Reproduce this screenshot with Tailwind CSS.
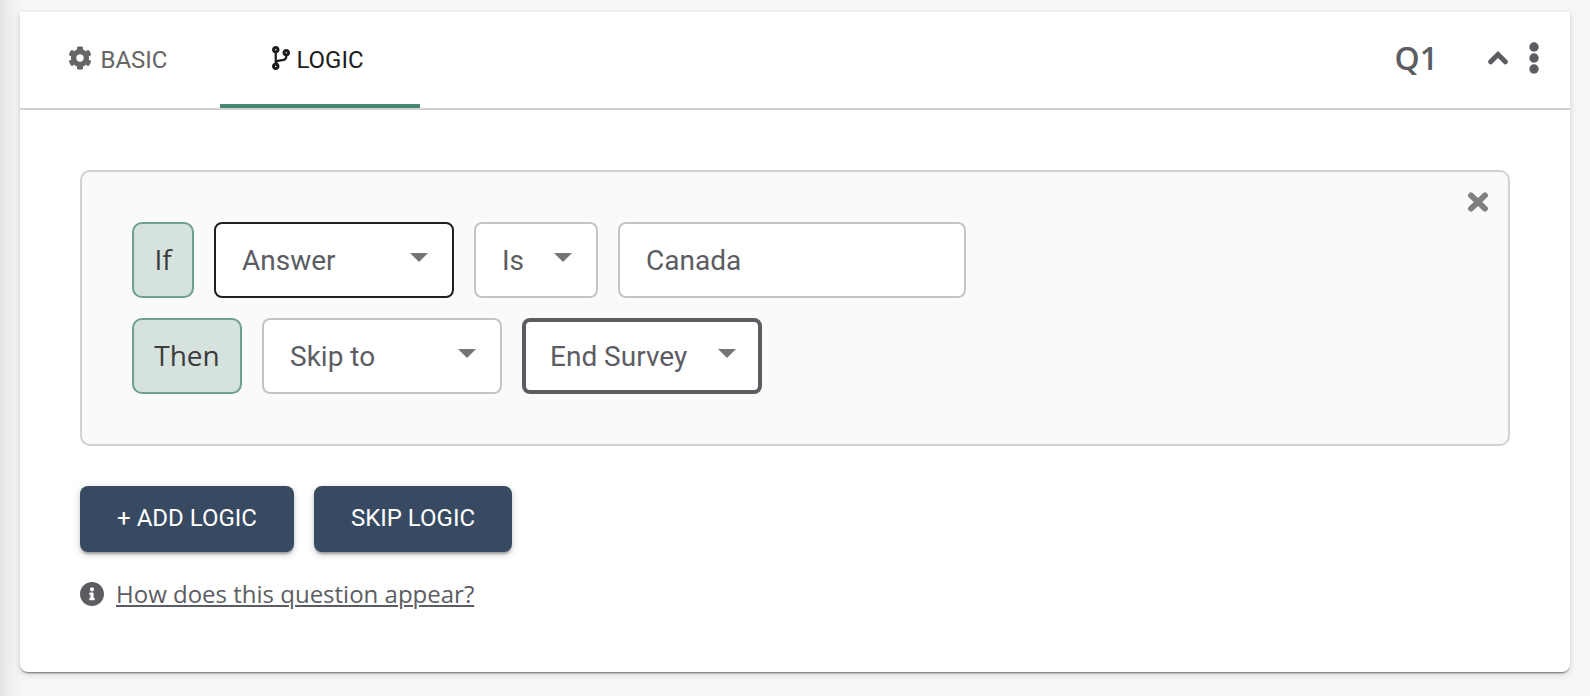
<!DOCTYPE html>
<html lang="en">
<head>
<meta charset="utf-8">
<meta name="viewport" content="width=device-width, initial-scale=1">
<title>Question logic</title>
<script src="https://cdn.jsdelivr.net/npm/@tailwindcss/browser@4"></script>
</head>
<body class="min-h-screen bg-[#f6f6f6] bg-[linear-gradient(to_right,#e4e4e4,#f2f2f2_14px,#f6f6f6_26px)] px-5 pt-3 pb-6 font-['Roboto',sans-serif] text-[#5c5d63]">
<main class="rounded-b-lg bg-white pb-[62px] shadow-[0_2px_2px_-1px_rgba(0,0,0,0.5),0_2px_6px_rgba(0,0,0,0.14)]">
  <header class="flex h-[98px] items-stretch justify-between border-b-2 border-[#d2d2d2]">
    <div role="tablist" class="flex">
      <button role="tab" aria-selected="false" class="flex w-[200px] items-center justify-center gap-2 border-y-4 border-transparent pr-1 text-2xl text-[#666]">
        <svg class="mb-1 size-6" viewBox="0 0 512 512" fill="currentColor" aria-hidden="true"><path d="M487.4 315.7l-42.6-24.6c4.3-23.2 4.3-47 0-70.2l42.6-24.6c4.9-2.8 7.1-8.6 5.5-14-11.1-35.6-30-67.8-54.7-94.6-3.8-4.1-10-5.1-14.8-2.3L380.8 110c-17.9-15.4-38.5-27.3-60.8-35.1V25.8c0-5.6-3.9-10.5-9.4-11.7-36.7-8.2-74.3-7.8-109.2 0-5.5 1.2-9.4 6.1-9.4 11.7V75c-22.2 7.9-42.8 19.8-60.8 35.1L88.7 85.5c-4.9-2.8-11-1.9-14.8 2.3-24.7 26.7-43.6 58.9-54.7 94.6-1.7 5.4.6 11.2 5.5 14L67.3 221c-4.3 23.2-4.3 47 0 70.2l-42.6 24.6c-4.9 2.8-7.1 8.6-5.5 14 11.1 35.6 30 67.8 54.7 94.6 3.8 4.1 10 5.1 14.8 2.3l42.6-24.6c17.9 15.4 38.5 27.3 60.8 35.1v49.2c0 5.6 3.9 10.5 9.4 11.7 36.7 8.2 74.3 7.8 109.2 0 5.5-1.2 9.4-6.1 9.4-11.7v-49.2c22.2-7.9 42.8-19.8 60.8-35.1l42.6 24.6c4.9 2.8 11 1.9 14.8-2.3 24.7-26.7 43.6-58.9 54.7-94.6 1.5-5.5-.7-11.3-5.6-14.1zM256 336c-44.1 0-80-35.9-80-80s35.9-80 80-80 80 35.9 80 80-35.9 80-80 80z"/></svg>
        BASIC
      </button>
      <button role="tab" aria-selected="true" class="flex w-[200px] items-center justify-center gap-1.5 border-y-4 border-t-transparent border-b-[#488674] pr-1 text-2xl text-[#1c1c1c]">
        <svg class="mb-1 h-6 w-[18px]" viewBox="0 0 384 512" fill="currentColor" aria-hidden="true"><path d="M384 144c0-44.2-35.8-80-80-80s-80 35.8-80 80c0 36.4 24.3 67.1 57.5 76.8-.6 16.1-4.2 28.5-11 36.9-15.4 19.2-49.3 22.4-85.2 25.7-28.2 2.6-57.4 5.4-81.3 16.9v-144c32.5-10.2 56-40.5 56-76.3 0-44.2-35.8-80-80-80S0 35.8 0 80c0 35.8 23.5 66.1 56 76.3v199.3C23.5 365.9 0 396.2 0 432c0 44.2 35.8 80 80 80s80-35.8 80-80c0-34-21.2-63.1-51.2-74.6 3.1-5.2 7.8-9.8 14.9-13.4 16.2-8.2 40.4-10.4 66.1-12.8 42.2-3.9 90-8.4 118.2-43.4 14-17.4 21.1-39.8 21.6-67.9 31.6-10.8 54.4-40.7 54.4-75.9zM80 64c8.8 0 16 7.2 16 16s-7.2 16-16 16-16-7.2-16-16 7.2-16 16-16zm0 384c-8.8 0-16-7.2-16-16s7.2-16 16-16 16 7.2 16 16-7.2 16-16 16zm224-320c8.8 0 16 7.2 16 16s-7.2 16-16 16-16-7.2-16-16 7.2-16 16-16z"/></svg>
        LOGIC
      </button>
    </div>
    <div class="flex items-center pr-7 pb-1">
      <h2 class="pr-[50px] font-['Open_Sans','Noto_Sans',sans-serif] text-[32px] leading-10 font-semibold">Q1</h2>
      <button aria-label="Collapse question" class="pr-[18px]">
        <svg class="h-8 w-5" viewBox="0 0 20 32" fill="none" stroke="currentColor" stroke-width="5" stroke-linecap="round" aria-hidden="true"><path d="M2.700 19.800 10 12.500 17.300 19.800"/></svg>
      </button>
      <button aria-label="More options">
        <svg class="h-8 w-4" viewBox="0 0 16 32" fill="currentColor" aria-hidden="true"><circle cx="8" cy="5" r="4.700"/><circle cx="8" cy="16" r="4.700"/><circle cx="8" cy="27" r="4.700"/></svg>
      </button>
    </div>
  </header>

  <section class="px-[60px] pt-[60px]">
    <div class="relative flex flex-col gap-5 rounded-[10px] border-2 border-[#d2d2d2] bg-[#fafafa] p-[50px] text-[28px] leading-8">
      <button aria-label="Remove logic" class="absolute top-5 right-5 text-[#808080]">
        <svg class="size-5" viewBox="0 0 20 20" fill="none" stroke="currentColor" stroke-width="5.800" stroke-linecap="round" aria-hidden="true"><path d="M3 3.400 17 16.600M17 3.400 3 16.600"/></svg>
      </button>
      <div class="flex gap-5">
        <label for="subject" class="flex h-[76px] w-[62px] items-center justify-center rounded-[10px] border-2 border-[#6b9f8f] bg-[#d6e2de] pb-0.5 font-['Open_Sans','Noto_Sans',sans-serif] text-[#3c3c3c]">If</label>
        <div class="relative w-60">
          <select id="subject" class="size-full appearance-none rounded-lg border-2 border-[#1f1f1f] bg-white pt-0.5 pr-12 pl-[26px]"><option>Answer</option></select>
          <svg class="pointer-events-none absolute top-[31px] right-[26px] h-[9px] w-[18px]" viewBox="0 0 18 9" fill="#757575" aria-hidden="true"><path d="M0 0h18L9 9z"/></svg>
        </div>
        <div class="relative w-[124px]">
          <select aria-label="Comparison" class="size-full appearance-none rounded-lg border-2 border-[#c4c4c4] bg-white pt-0.5 pr-12 pl-[26px]"><option>Is</option></select>
          <svg class="pointer-events-none absolute top-[31px] right-[26px] h-[9px] w-[18px]" viewBox="0 0 18 9" fill="#757575" aria-hidden="true"><path d="M0 0h18L9 9z"/></svg>
        </div>
        <input type="text" aria-label="Answer value" value="Canada" class="w-[348px] rounded-lg border-2 border-[#c4c4c4] bg-white px-[26px] pt-0.5">
      </div>
      <div class="flex gap-5">
        <label for="action" class="flex h-[76px] w-[110px] items-center justify-center rounded-[10px] border-2 border-[#6b9f8f] bg-[#d6e2de] pb-0.5 font-['Open_Sans','Noto_Sans',sans-serif] text-[#3c3c3c]">Then</label>
        <div class="relative w-60">
          <select id="action" class="size-full appearance-none rounded-lg border-2 border-[#c4c4c4] bg-white pt-0.5 pr-12 pl-[26px]"><option>Skip to</option></select>
          <svg class="pointer-events-none absolute top-[31px] right-[26px] h-[9px] w-[18px]" viewBox="0 0 18 9" fill="#757575" aria-hidden="true"><path d="M0 0h18L9 9z"/></svg>
        </div>
        <div class="relative w-60">
          <select aria-label="Destination" class="size-full appearance-none rounded-lg border-4 border-[#5c5d63] bg-white pt-0.5 pr-12 pl-6"><option>End Survey</option></select>
          <svg class="pointer-events-none absolute top-[31px] right-[26px] h-[9px] w-[18px]" viewBox="0 0 18 9" fill="#757575" aria-hidden="true"><path d="M0 0h18L9 9z"/></svg>
        </div>
      </div>
    </div>

    <div class="mt-10 flex gap-5 text-2xl text-white">
      <button class="h-[66px] w-[214px] rounded-lg bg-[#384a62] pb-0.5 shadow-[0_3px_3px_-1px_rgba(0,0,0,0.35),0_2px_8px_rgba(0,0,0,0.16)]">+ ADD LOGIC</button>
      <button class="h-[66px] w-[198px] rounded-lg bg-[#384a62] pb-0.5 shadow-[0_3px_3px_-1px_rgba(0,0,0,0.35),0_2px_8px_rgba(0,0,0,0.16)]">SKIP LOGIC</button>
    </div>

    <div class="mt-[26px] flex items-center gap-3 font-['Open_Sans','Noto_Sans',sans-serif] text-2xl">
      <svg class="size-6" viewBox="8 8 496 496" fill="currentColor" aria-hidden="true"><path d="M256 8C119.043 8 8 119.083 8 256c0 136.997 111.043 248 248 248s248-111.003 248-248C504 119.083 392.957 8 256 8zm0 110c23.196 0 42 18.804 42 42s-18.804 42-42 42-42-18.804-42-42 18.804-42 42-42zm56 254c0 6.627-5.373 12-12 12h-88c-6.627 0-12-5.373-12-12v-24c0-6.627 5.373-12 12-12h12v-64h-12c-6.627 0-12-5.373-12-12v-24c0-6.627 5.373-12 12-12h64c6.627 0 12 5.373 12 12v100h12c6.627 0 12 5.373 12 12v24z"/></svg>
      <a href="#appearance" class="underline decoration-2 underline-offset-2">How does this question appear?</a>
    </div>
  </section>
</main>
</body>
</html>
